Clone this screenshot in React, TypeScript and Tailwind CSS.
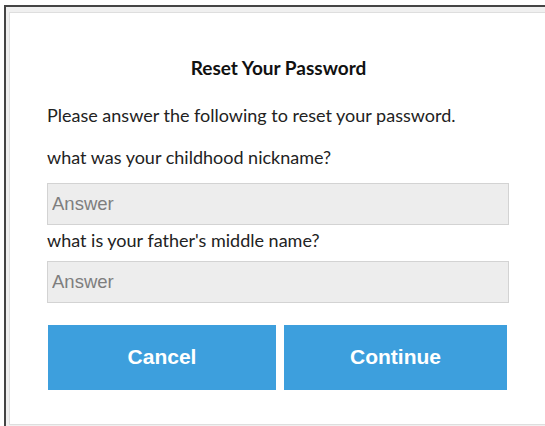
export default function App() {
    return (
        <div className="relative h-[426px] w-[545px] overflow-hidden bg-white">
            {/* window frame: dark edge, light gutter, then the dialog card */}
            <div className="ml-[4px] mt-[5px] h-[440px] w-[560px] border-l-2 border-t-2 border-[#454545] bg-[#f0f0f0] pl-[3px] pt-[5px]">
                <div className="h-[413px] border border-[#dedede] bg-white">
                    <div className="w-[500px] pl-[37px] pt-[43px] font-['Lato',sans-serif] text-[#222]">
                        <h1 className="text-center text-[19px] font-bold leading-[24px] text-[#111]">Reset Your Password</h1>
                        <p className="mt-[23px] text-[18px] leading-[24px]">Please answer the following to reset your password.</p>
                        <label className="mt-[18px] block text-[18px] leading-[24px]">what was your childhood nickname?</label>
                        <input
                            className="mt-[14px] block h-[42px] w-[462px] border border-[#d3d3d3] bg-[#ededed] px-[4px] font-['Liberation_Sans',sans-serif] text-[18.5px] outline-none placeholder:text-[#7e7e7e]"
                            placeholder="Answer"
                        />
                        <label className="mt-[3px] block text-[18px] leading-[24px]">what is your father's middle name?</label>
                        <input
                            className="mt-[9px] block h-[42px] w-[462px] border border-[#d3d3d3] bg-[#ededed] px-[4px] font-['Liberation_Sans',sans-serif] text-[18.5px] outline-none placeholder:text-[#7e7e7e]"
                            placeholder="Answer"
                        />
                        <div className="mt-[22px] flex gap-[8px] pl-[1px] font-['Liberation_Sans',sans-serif]">
                            <button className="h-[65px] w-[228px] bg-[#3d9fdd] pb-[2px] text-[21px] font-bold text-white">Cancel</button>
                            <button className="h-[65px] w-[223px] bg-[#3d9fdd] pb-[2px] text-[21px] font-bold text-white">Continue</button>
                        </div>
                    </div>
                </div>
            </div>
        </div>
    )
}
